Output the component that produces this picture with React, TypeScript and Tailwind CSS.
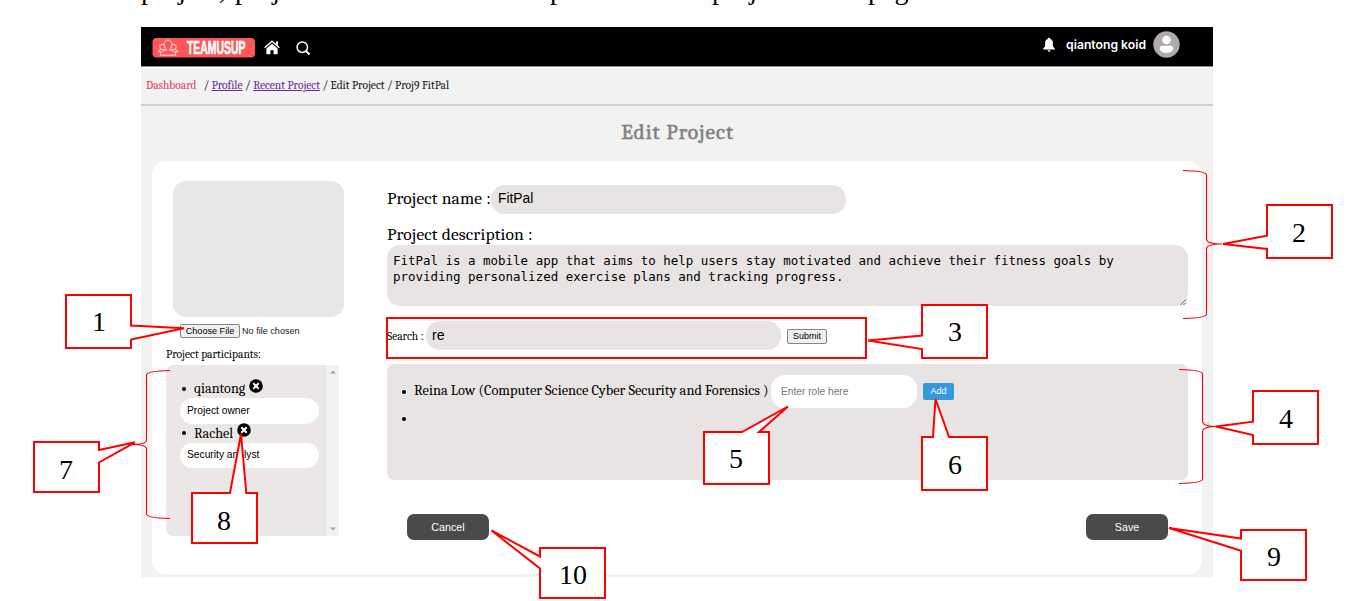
import React from "react";

const serif = "font-[Cambria,Caladea,'Liberation_Serif',serif]";

type Callout = { n: string; d: string; x: number; y: number };

const callouts: Callout[] = [
  { n: "1", d: "M66 295H131V325.5L184 328.3L131 339.5V348H66Z", x: 99, y: 331 },
  { n: "2", d: "M1267 205H1332V258H1267V249L1223 244L1267 235.7Z", x: 1299, y: 242 },
  { n: "3", d: "M922 305H987V358H922V349L868 340.5L922 335.5Z", x: 955, y: 341 },
  { n: "4", d: "M1253 391H1318V444H1253V435L1216 426.5L1253 421.7Z", x: 1286, y: 428 },
  { n: "5", d: "M704 432H742L788 406.5L759 432H769V484H704Z", x: 736, y: 468 },
  { n: "6", d: "M922 437H933L935.5 399L949 437H987V490H922Z", x: 955, y: 474 },
  { n: "7", d: "M34 442H99V450L135 442.3L99 462.5V492H34Z", x: 66, y: 479 },
  { n: "8", d: "M192 493H230L241 434L246.3 493H257V543H192Z", x: 224, y: 530 },
  { n: "9", d: "M1241 530H1306V580H1241V550.7L1169 528L1241 538.5Z", x: 1274, y: 566 },
  { n: "10", d: "M540 548H605V598H540V568.5L491.5 530.5L540 556.5Z", x: 573, y: 584 },
];

const braces = [
  "M1183 170.5Q1206.5 171 1206.5 175V239Q1206.5 244 1222 244Q1206.5 244 1206.5 249V314Q1206.5 318 1183 318.5",
  "M1179 369.5Q1202.5 370 1202.5 374V421Q1202.5 426.5 1217 426.5Q1202.5 426.5 1202.5 432V479Q1202.5 483 1179 483.5",
  "M170 370.5Q146.5 371 146.5 375V440Q146.5 444.5 131 444.5Q146.5 444.5 146.5 449V514Q146.5 518 170 518.5",
];

function Annotations() {
  return (
    <svg className="pointer-events-none absolute left-0 top-0" width="1347" height="601" viewBox="0 0 1347 601">
      <rect x="387" y="318" width="479" height="40" fill="none" stroke="#f00" strokeWidth="2" />
      {callouts.map((c) => (
        <g key={c.n}>
          <path d={c.d} fill="#fff" stroke="#f00" strokeWidth="2" strokeMiterlimit="3" />
          <text x={c.x} y={c.y} textAnchor="middle" className="fill-black font-['Liberation_Serif',serif] text-[28px]">
            {c.n}
          </text>
        </g>
      ))}
      {braces.map((d) => (
        <path key={d} d={d} fill="none" stroke="#f00" strokeWidth="1.1" />
      ))}
    </svg>
  );
}

function Logo() {
  return (
    <svg width="103" height="20" viewBox="0 0 103 20" className="block">
      <rect x="0.500" width="102.500" height="19.500" rx="4" fill="#ff5757" />
      <g fill="none" stroke="#fff" strokeWidth="0.8" strokeLinecap="round" strokeLinejoin="round">
        <path d="M16 2.200c-2.600 0-4 1.700-4 4.200 0 2 .9 3.700 2.300 4.600v1.200c-3.200.4-5.300 1.300-5.600 2.900l-.5 2.100h15.600l-.5-2.100c-.3-1.600-2.400-2.500-5.600-2.900v-1.200c1.400-.9 2.300-2.600 2.300-4.600 0-2.500-1.400-4.200-4-4.200z" />
        <path d="M11.700 6.300c-2-.8-3.800.4-3.800 2.500 0 1.200.5 2.200 1.300 2.800-1.700.2-2.800.8-3.100 2.300h2.800M12.600 11.400c-.5.300-1.600.2-2.400-.1" />
        <path d="M20.300 6.300c2-.8 3.800.4 3.800 2.500 0 1.200-.5 2.200-1.300 2.800 1.700.2 2.800.8 3.100 2.300h-2.800M19.400 11.400c.5.300 1.600.2 2.400-.1" />
      </g>
      <text
        x="35"
        y="16.200"
        textLength="58.500"
        lengthAdjust="spacingAndGlyphs"
        className="fill-white stroke-white stroke-[0.6] font-['Liberation_Sans_Narrow','Liberation_Sans',sans-serif] text-[18px] font-bold"
      >
        TEAMUSUP
      </text>
    </svg>
  );
}

function Header() {
  return (
    <header className="flex h-10 items-start border-b border-[#8d8888] bg-black pl-[11px] pr-[33px]">
      <div className="mt-[11px]">
        <Logo />
      </div>
      <svg className="ml-[9px] mt-[13px]" width="16" height="16" viewBox="0 0 16 16">
        <path d="M0.700 7.700L8 1.300l7.300 6.400" fill="none" stroke="#fff" strokeWidth="1.500" />
        <path d="M12 1.500h2v4l-2-1.800z" fill="#fff" />
        <path d="M8 3.700l5.600 4.900V14.300H9.600v-4H6.400v4H2.400V8.600z" fill="#fff" />
      </svg>
      <svg className="ml-[16px] mt-[14px]" width="15" height="15" viewBox="0 0 15 15" fill="none" stroke="#fff">
        <circle cx="6.300" cy="6.200" r="5.200" strokeWidth="1.500" />
        <path d="M10 10l3.500 3.500" strokeWidth="1.900" />
      </svg>
      <svg className="ml-auto mt-[10px]" width="12" height="16" viewBox="0 0 12 16" fill="#fff">
        <path d="M6 .8c.8 0 1.200.5 1.200 1.200C9 2.600 9.900 4 9.900 6v3.500l1.900 2v1H.2v-1l1.900-2V6c0-2 .9-3.400 2.700-4C4.800 1.300 5.200.8 6 .8zM4.600 13.300h2.800c0 .9-.6 1.500-1.400 1.500s-1.400-.6-1.400-1.500z" />
      </svg>
      <span className="ml-[11px] mt-[9px] whitespace-nowrap font-[Inter,'Liberation_Sans',sans-serif] text-[12.200px] font-semibold leading-[18px] text-white">
        qiantong koid
      </span>
      <svg className="ml-[7px] mt-[4px]" width="27" height="27" viewBox="0 0 27 27">
        <circle cx="13.500" cy="13.500" r="13.200" fill="#afabab" />
        <circle cx="13.500" cy="9" r="4.300" fill="#fff" />
        <path d="M9.500 14.800h8c1.700 0 2.700 1.100 2.700 2.400 0 2.900-3 4.600-6.700 4.600s-6.700-1.700-6.700-4.600c0-1.300 1-2.400 2.700-2.400z" fill="#fff" />
      </svg>
    </header>
  );
}

function Breadcrumb() {
  return (
    <nav className={`${serif} flex h-[39px] items-center whitespace-nowrap border-b-2 border-t border-b-[#cfd0d0] border-t-white pl-[5px] text-[11.450px] text-[#111]`}>
      <span className="w-[57.500px] text-[#e0405c]">Dashboard</span>
      <span className="whitespace-pre">
        /{" "}
        <a className="text-[#5f2b96] underline">Profile</a> /{" "}
        <a className="text-[#5f2b96] underline">Recent Project</a> / Edit Project / Proj9 FitPal
      </span>
    </nav>
  );
}

function Participant({ name, role }: { name: string; role: string }) {
  return (
    <li className="h-[44.500px]">
      <div className="flex h-[19px] items-center">
        <span className="ml-[2px] size-1 rounded-full bg-black" />
        <span className="ml-[8px] text-[14.200px] leading-[19px]">{name}</span>
        <svg className="mb-[6px] ml-[4px]" width="14" height="14" viewBox="0 0 14 14">
          <circle cx="7" cy="7" r="6.800" fill="#000" />
          <path d="M4.300 4.300l5.400 5.400M9.700 4.300l-5.400 5.400" stroke="#fff" strokeWidth="2" />
        </svg>
      </div>
      <div className="flex h-[25.500px] w-[139px] items-center rounded-full bg-white pb-px pl-[7px] font-['Liberation_Sans',sans-serif] text-[10.250px]">
        {role}
      </div>
    </li>
  );
}

function Sidebar() {
  return (
    <aside className="w-[192px] pl-[14px] pt-[20px]">
      <div className="ml-[7px] h-[136.500px] w-[171px] rounded-[13px] bg-[#e8e7e5]" />
      <div className="ml-[14px] mt-[7px] flex items-center font-['Liberation_Sans',sans-serif] text-[9.100px] leading-[12px]">
        <span className="flex h-[14px] w-[60px] items-center justify-center rounded-[2px] border border-[#858585] bg-[#efefef]">
          Choose File
        </span>
        <span className="ml-[2px] text-[#222]">No file chosen</span>
      </div>
      <h2 className={`${serif} mt-[10px] text-[11.500px] leading-[14px]`}>Project participants:</h2>
      <div className="mt-[3px] flex h-[171px] w-[173px] overflow-hidden rounded-l-[7px] bg-[#ece7e7]">
        <ul className={`${serif} w-[160px] pl-[14px] pt-[14px]`}>
          <Participant name="qiantong" role="Project owner" />
          <Participant name="Rachel" role="Security analyst" />
        </ul>
        <div className="flex w-[13px] flex-col items-center justify-between bg-[#f1f1f1] py-[5px]">
          <svg width="6" height="4" viewBox="0 0 6 4">
            <path d="M0 3.500L3 .5l3 3z" fill="#a3a3a3" />
          </svg>
          <svg width="6" height="4" viewBox="0 0 6 4">
            <path d="M0 .5l3 3 3-3z" fill="#a3a3a3" />
          </svg>
        </div>
      </div>
    </aside>
  );
}

function Details() {
  return (
    <section className="ml-[43px] w-[801px] pt-[24px]">
      <div className={`${serif} flex text-[17.500px] tracking-[0.150px]`}>
        <span className="w-[104px] whitespace-nowrap leading-[26px]">Project name :</span>
        <span className="flex h-[29.500px] w-[355px] rounded-[14px] bg-[#e8e4e3] pl-[7px] font-['Liberation_Sans',sans-serif] text-[13.800px] leading-[28px] tracking-normal">
          FitPal
        </span>
      </div>
      <div className={`${serif} mt-[10px] whitespace-nowrap text-[17.500px] leading-[21px] tracking-[0.150px]`}>
        Project description :
      </div>
      <div className="relative h-[61px] rounded-[13px] bg-[#e8e4e3] px-[6px] pt-[8px] font-['DejaVu_Sans_Mono','Liberation_Mono',monospace] text-[12.470px] leading-[16px]">
        <p className="whitespace-pre">
          {"FitPal is a mobile app that aims to help users stay motivated and achieve their fitness goals by\nproviding personalized exercise plans and tracking progress."}
        </p>
        <svg className="absolute bottom-0 right-[1px]" width="7" height="7" viewBox="0 0 7 7" stroke="#555">
          <path d="M.5 6L6 .5M3.500 6L6 3.500" />
        </svg>
      </div>
      <div className="mt-[15px] flex h-[30px] items-start">
        <span className={`${serif} w-[39px] whitespace-nowrap text-[11.450px] leading-[31px]`}>Search :</span>
        <span className="h-[29px] w-[355px] rounded-[14px] bg-[#e8e4e3] pl-[6px] font-['Liberation_Sans',sans-serif] text-[14.200px] leading-[28px]">
          re
        </span>
        <span className="ml-[6px] mt-[8px] flex h-[15px] w-[40px] items-center justify-center rounded-[2px] border border-[#858585] bg-[#efefef] font-['Liberation_Sans',sans-serif] text-[9px]">
          Submit
        </span>
      </div>
      <ul className={`${serif} mt-[13px] h-[116px] rounded-[7px] bg-[#e8e4e3] pl-[15px] pt-[11px]`}>
        <li className="flex h-[33px] items-center">
          <span className="size-1 rounded-full bg-black" />
          <span className="ml-[8px] w-[357px] whitespace-nowrap pb-px text-[14.400px]">
            Reina Low (Computer Science Cyber Security and Forensics )
          </span>
          <span className="flex h-[33px] w-[146px] items-center rounded-[14px] bg-white pl-[10px] font-['Liberation_Sans',sans-serif] text-[10.200px] text-[#777]">
            Enter role here
          </span>
          <span className="ml-[6px] flex h-[17px] w-[31px] items-center justify-center rounded-[2px] bg-[#3498db] font-['Liberation_Sans',sans-serif] text-[9px] text-white">
            Add
          </span>
        </li>
        <li className="flex h-[22px] items-center">
          <span className="size-1 rounded-full bg-black" />
        </li>
      </ul>
      <div className="mt-[34px] flex justify-between px-[20px] font-['Liberation_Sans',sans-serif] text-[10.700px] text-white">
        <span className="flex h-[26px] w-[82px] items-center justify-center rounded-[7px] bg-[#4a4a4a]">Cancel</span>
        <span className="flex h-[26px] w-[82px] items-center justify-center rounded-[7px] bg-[#4a4a4a]">Save</span>
      </div>
    </section>
  );
}

const intro = [
  { text: "project,", x: 141 },
  { text: "project", x: 235 },
  { text: "p", x: 550 },
  { text: "project", x: 712 },
  { text: "page", x: 868 },
];

export default function App() {
  return (
    <div className="relative h-[601px] w-[1347px] overflow-hidden bg-white text-black">
      <div className="h-[27px]">
        <svg width="1347" height="27" className="block">
          {intro.map((w) => (
            <text key={w.x} x={w.x} y="-1" className="fill-black font-['Liberation_Serif',serif] text-[28px]">
              {w.text}
            </text>
          ))}
        </svg>
      </div>
      <main className="ml-[141px] h-[550px] w-[1072px] bg-[#f2f2f2]">
        <Header />
        <Breadcrumb />
        <h1 className={`${serif} h-[54.500px] pl-[1px] text-center text-[21.500px] leading-[53px] tracking-[0.950px] text-[#808080] [-webkit-text-stroke:0.5px_#808080]`}>
          Edit Project
        </h1>
        <div className="ml-[11px] flex h-[413.500px] w-[1050px] rounded-[14px] bg-white">
          <Sidebar />
          <Details />
        </div>
      </main>
      <Annotations />
    </div>
  );
}
